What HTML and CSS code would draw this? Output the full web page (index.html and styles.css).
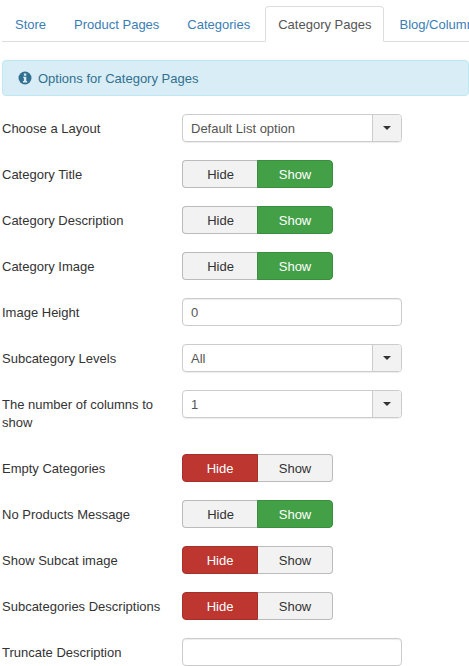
FILE: index.html
```html
<!DOCTYPE html>
<html lang="en">
<head>
    <meta charset="UTF-8">
    <title>Category Pages</title>
    <link rel="stylesheet" href="styles.css">
</head>
<body>

<ul class="tabs">
    <li><a href="#">Store</a></li>
    <li><a href="#">Product Pages</a></li>
    <li><a href="#">Categories</a></li>
    <li class="active"><a href="#">Category Pages</a></li>
    <li><a href="#">Blog/Columns</a></li>
</ul>

<div class="alert">
    <svg class="info-icon" viewBox="0 0 14 14" width="14" height="14">
        <circle cx="7" cy="7" r="6.5" fill="#31708f"/>
        <rect x="5.9" y="2.5" width="2.4" height="2.2" fill="#d9edf7"/>
        <path d="M5.3 5.8h3v4.3h0.9v1.3H4.9v-1.3h1V7.1H5.3z" fill="#d9edf7"/>
    </svg>
    Options for Category Pages
</div>

<div class="row">
    <label>Choose a Layout</label>
    <div class="select"><span>Default List option</span><b><i class="caret"></i></b></div>
</div>
<div class="row">
    <label>Category Title</label>
    <div class="toggle"><span>Hide</span><span class="on-show">Show</span></div>
</div>
<div class="row">
    <label>Category Description</label>
    <div class="toggle"><span>Hide</span><span class="on-show">Show</span></div>
</div>
<div class="row">
    <label>Category Image</label>
    <div class="toggle"><span>Hide</span><span class="on-show">Show</span></div>
</div>
<div class="row">
    <label>Image Height</label>
    <input class="field" type="text" value="0">
</div>
<div class="row">
    <label>Subcategory Levels</label>
    <div class="select"><span>All</span><b><i class="caret"></i></b></div>
</div>
<div class="row">
    <label>The number of columns to show</label>
    <div class="select"><span>1</span><b><i class="caret"></i></b></div>
</div>
<div class="row">
    <label>Empty Categories</label>
    <div class="toggle"><span class="on-hide">Hide</span><span>Show</span></div>
</div>
<div class="row">
    <label>No Products Message</label>
    <div class="toggle"><span>Hide</span><span class="on-show">Show</span></div>
</div>
<div class="row">
    <label>Show Subcat image</label>
    <div class="toggle"><span class="on-hide">Hide</span><span>Show</span></div>
</div>
<div class="row">
    <label>Subcategories Descriptions</label>
    <div class="toggle"><span class="on-hide">Hide</span><span>Show</span></div>
</div>
<div class="row">
    <label>Truncate Description</label>
    <input class="field" type="text">
</div>

</body>
</html>
```

FILE: styles.css
```css
html, body {
    height: 666px;
    overflow: hidden;
}
body {
    margin: 0;
    padding: 6px 0 0 2px;
    box-sizing: border-box;
    font-family: "Liberation Sans", Arial, sans-serif;
    font-size: 13px;
    line-height: 18px;
    color: #333;
    background: #fff;
}
.tabs {
    display: flex;
    margin: 0 0 18px;
    padding: 0;
    list-style: none;
    white-space: nowrap;
    border-bottom: 1px solid #ddd;
}
.tabs li {
    flex: none;
    margin: 0 2px -1px 0;
}
.tabs a {
    display: block;
    padding: 9px 12px 7px;
    border: 1px solid transparent;
    border-radius: 4px 4px 0 0;
    color: #3b7db5;
    text-decoration: none;
}
.tabs .active a {
    color: #555;
    background: #fff;
    border-color: #ddd #ddd #fff;
}
.alert {
    display: flex;
    align-items: center;
    gap: 6px;
    height: 36px;
    box-sizing: border-box;
    margin: 0 0 18px;
    padding: 2px 15px 0;
    background: #d9edf7;
    border: 1px solid #bce8f1;
    border-radius: 4px;
    color: #31708f;
}
.info-icon {
    flex: none;
    margin-top: -2px;
}
.row {
    display: flex;
    align-items: flex-start;
    margin-bottom: 18px;
}
.row label {
    flex: none;
    width: 160px;
    margin-right: 20px;
    padding: 6px 0 4px;
}
.select {
    display: flex;
    width: 220px;
    height: 28px;
    box-sizing: border-box;
    border: 1px solid #ccc;
    border-radius: 4px;
    box-shadow: 0 1px 1px rgba(0, 0, 0, 0.075);
    color: #555;
}
.select span {
    flex: 1;
    padding: 5px 8px 3px;
}
.select b {
    display: flex;
    align-items: center;
    justify-content: center;
    width: 28px;
    background: #f2f2f2;
    border-left: 1px solid #ccc;
    border-radius: 0 3px 3px 0;
}
.caret {
    border-top: 4px solid #333;
    border-left: 4px solid transparent;
    border-right: 4px solid transparent;
}
.field {
    display: block;
    width: 220px;
    height: 28px;
    box-sizing: border-box;
    padding: 4px 8px;
    border: 1px solid #ccc;
    border-radius: 4px;
    box-shadow: inset 0 1px 1px rgba(0, 0, 0, 0.075);
    font: inherit;
    color: #555;
    outline: none;
}
.toggle {
    display: flex;
    width: 151px;
    height: 28px;
}
.toggle span {
    flex: none;
    width: 76px;
    box-sizing: border-box;
    text-align: center;
    padding-top: 5px;
    background: #f2f2f2;
    border: 1px solid #bbb;
}
.toggle span:first-child {
    border-right: none;
    border-radius: 4px 0 0 4px;
}
.toggle span:last-child {
    width: 75px;
    border-left: none;
    border-radius: 0 4px 4px 0;
}
.toggle .on-show,
.toggle span.on-show:last-child {
    width: 76px;
    margin-left: -1px;
    background: #43a047;
    border: 1px solid #388e3c;
    color: #fff;
}
.toggle .on-hide,
.toggle span.on-hide:first-child {
    background: #bd362f;
    border: 1px solid #a52f29;
    color: #fff;
}
```
